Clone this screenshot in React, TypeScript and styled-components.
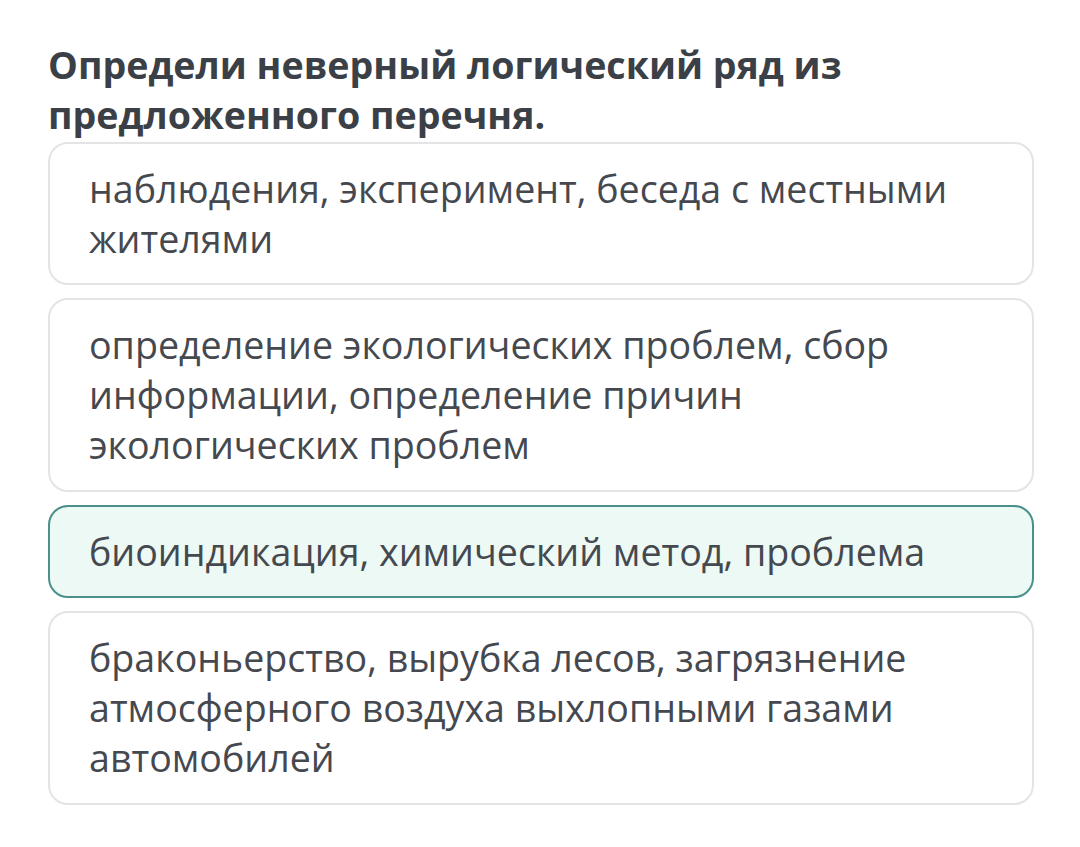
import React from "react";
import styled, { createGlobalStyle } from "styled-components";

const Global = createGlobalStyle`
  html, body { margin: 0; padding: 0; background: #ffffff; }
  body { font-family: "Open Sans", "Noto Sans", sans-serif; }
`;

const Page = styled.main`
  width: 1080px;
  padding: 40px 46px 0 48px;
  box-sizing: border-box;
`;

const Question = styled.h1`
  margin: 0 0 2px 0;
  font-size: 37.6px;
  font-weight: 700;
  line-height: 50px;
  color: #3b4046;
`;

const Options = styled.div`
  display: flex;
  flex-direction: column;
  gap: 13px;
`;

const Option = styled.div<{ $selected?: boolean }>`
  border: 2px solid ${(p) => (p.$selected ? "#4a908b" : "#e2e4e6")};
  background: ${(p) => (p.$selected ? "#ecf9f4" : "#ffffff")};
  border-radius: 20px;
  padding: 19.5px 40px 19.5px 39px;
  font-size: 37.6px;
  line-height: 50.2px;
  color: #45494f;
`;

const items = [
  "наблюдения, эксперимент, беседа с местными жителями",
  "определение экологических проблем, сбор информации, определение причин экологических проблем",
  "биоиндикация, химический метод, проблема",
  "браконьерство, вырубка лесов, загрязнение атмосферного воздуха выхлопными газами автомобилей",
];

export default function App() {
  return (
    <>
      <Global />
      <Page>
        <Question>Определи неверный логический ряд из предложенного перечня.</Question>
        <Options>
          {items.map((t, i) => (
            <Option key={i} $selected={i === 2}>
              {t}
            </Option>
          ))}
        </Options>
      </Page>
    </>
  );
}
